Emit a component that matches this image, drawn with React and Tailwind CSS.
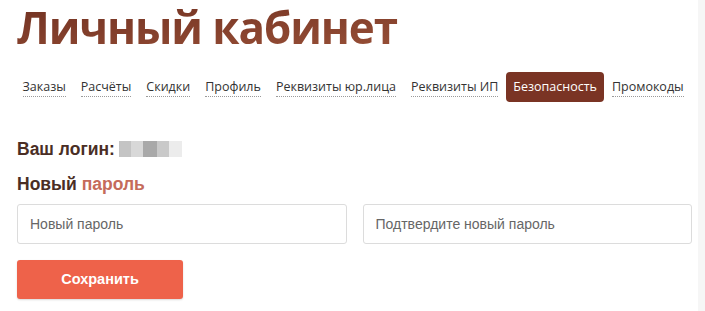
import React from 'react';

const tabs = [
  'Заказы',
  'Расчёты',
  'Скидки',
  'Профиль',
  'Реквизиты юр.лица',
  'Реквизиты ИП',
  'Безопасность',
  'Промокоды'
];

const App = () => {
  const active = 'Безопасность';

  return (
    <div className="flex min-h-[311px] bg-white">
      <div className="min-w-0 flex-1 pl-[17px] pr-[6px]">
        <h1
          className="-mt-[3px] text-[44px] leading-[60px] font-bold tracking-[-1.1px] bg-gradient-to-br from-[#6e2f20] to-[#a85c40] bg-clip-text text-transparent"
          style={{ fontFamily: '"Open Sans", "Liberation Sans", sans-serif' }}
        >
          Личный кабинет
        </h1>

        <nav
          className="mt-[15px] -ml-[2px] flex items-center whitespace-nowrap text-[12.5px] leading-[18px] text-[#333]"
          style={{ fontFamily: '"Open Sans", "DejaVu Sans", sans-serif' }}
        >
          {tabs.map((tab) =>
            tab === active ? (
              <span key={tab} className="mx-[0.5px] rounded-[4px] bg-[#7a3424] px-[7px] py-[6px] text-white">
                {tab}
              </span>
            ) : (
              <span key={tab} className="px-[7.5px] py-[6px]">
                <span className="border-b border-dotted border-[#9a9a9a] pb-[1px]">{tab}</span>
              </span>
            )
          )}
        </nav>

        <div
          className="mt-[37px] flex items-center gap-[4px] text-[17.5px] leading-[20px] font-bold text-[#4a2e25]"
          style={{ fontFamily: '"Liberation Sans", Arial, sans-serif' }}
        >
          <span>Ваш логин:</span>
          <span className="flex h-[16px]">
            <span className="w-[12px] bg-[#c4c4c4]" />
            <span className="w-[12px] bg-[#d8d8d8]" />
            <span className="w-[14px] bg-[#a9a9a9]" />
            <span className="w-[12px] bg-[#c9c9c9]" />
            <span className="w-[13px] bg-[#ececec]" />
          </span>
        </div>

        <div
          className="mt-[15px] text-[17.5px] leading-[20px] font-bold text-[#4a2e25]"
          style={{ fontFamily: '"Liberation Sans", Arial, sans-serif' }}
        >
          Новый <span className="text-[#c56b5b]">пароль</span>
        </div>

        <div
          className="mt-[10px] grid grid-cols-2 gap-[16px]"
          style={{ fontFamily: '"Liberation Sans", Arial, sans-serif' }}
        >
          <input
            type="password"
            placeholder="Новый пароль"
            className="h-[40px] min-w-0 rounded-[3px] border border-[#dcdcdc] px-[12px] text-[14px] placeholder:text-[#666] outline-none"
          />
          <input
            type="password"
            placeholder="Подтвердите новый пароль"
            className="h-[40px] min-w-0 rounded-[3px] border border-[#dcdcdc] px-[12px] text-[14px] placeholder:text-[#666] outline-none"
          />
        </div>

        <button
          className="mt-[16px] h-[39px] w-[166px] rounded-[3px] bg-[#ee624a] text-[14.5px] font-bold text-white shadow-[0_1px_2px_rgba(0,0,0,0.15)]"
          style={{ fontFamily: '"Liberation Sans", Arial, sans-serif' }}
        >
          Сохранить
        </button>
      </div>
      <div className="w-[7px] bg-[#f6f6f6]" />
    </div>
  );
};

export default App;
